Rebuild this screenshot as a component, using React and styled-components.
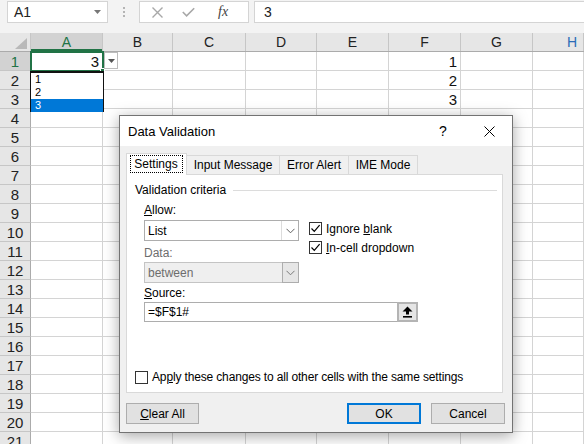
import React from 'react';
import styled, { createGlobalStyle } from 'styled-components';

const Global = createGlobalStyle`
  html, body { margin: 0; padding: 0; background: #fff; overflow: hidden; }
  #root { width: 584px; height: 444px; }
  * { box-sizing: border-box; }
`;

const Screen = styled.div`
  position: relative;
  width: 584px;
  height: 444px;
  overflow: hidden;
  background: #fff;
  font-family: "Liberation Sans", Arial, sans-serif;
  color: #222;
`;

/* ---------- formula bar ---------- */
const TopBar = styled.div`
  height: 33px;
  background: #f3f3f3;
  display: flex;
  align-items: flex-start;
  padding: 1px 0 0 7px;
`;

const NameBox = styled.div`
  width: 101px;
  height: 22px;
  background: #fff;
  border: 1px solid #d4d4d4;
  display: flex;
  align-items: center;
  justify-content: space-between;
  padding: 0 6px 0 6px;
  font-size: 14px;
  color: #222;
`;

const Dots = styled.div`
  width: 31px;
  height: 22px;
  display: flex;
  flex-direction: column;
  align-items: center;
  justify-content: center;
  gap: 2px;
  & > span { width: 2px; height: 2px; background: #b4b4b4; }
`;

const FxBox = styled.div`
  width: 110px;
  height: 22px;
  background: #fff;
  border: 1px solid #d4d4d4;
  display: flex;
  align-items: center;
  padding-left: 12px;
  gap: 19px;
`;

const FxText = styled.span`
  font-family: "Liberation Serif", "Times New Roman", serif;
  font-style: italic;
  font-size: 14px;
  color: #444;
  margin-left: 4px;
`;

const FormulaBox = styled.div`
  flex: 1;
  height: 22px;
  margin-left: 5px;
  background: #fff;
  border: 1px solid #d4d4d4;
  border-right: none;
  display: flex;
  align-items: center;
  padding-left: 9px;
  font-size: 14px;
`;

/* ---------- grid ---------- */
const HeaderRow = styled.div`
  display: flex;
  height: 19px;
  background: #e6e6e6;
  border-bottom: 1px solid #ababab;
`;

const Corner = styled.div`
  flex: 0 0 31px;
  border-right: 1px solid #c6c6c6;
  display: flex;
  align-items: flex-end;
  justify-content: flex-end;
  padding: 0 3px 2px 0;
`;

const ColHead = styled.div`
  flex: ${p => (p.$w ? `0 0 ${p.$w}px` : '1 1 auto')};
  border-right: 1px solid #c6c6c6;
  display: flex;
  align-items: center;
  font-size: 14px;
  color: ${p => p.$color || (p.$active ? '#217346' : '#222')};
  background: ${p => (p.$active ? '#d2d2d2' : 'transparent')};
  box-shadow: ${p => (p.$active ? 'inset 0 -2px 0 #217346' : 'none')};
  padding-left: ${p => p.$pl || 0}px;
  justify-content: ${p => (p.$pl ? 'flex-start' : 'center')};
`;

const Row = styled.div`
  display: flex;
  height: 19px;
`;

const RowHead = styled.div`
  flex: 0 0 31px;
  background: ${p => (p.$active ? '#d2d2d2' : '#e6e6e6')};
  color: ${p => (p.$active ? '#217346' : '#222')};
  border-right: 1px solid #ababab;
  border-bottom: 1px solid #c6c6c6;
  display: flex;
  align-items: center;
  justify-content: center;
  font-size: 15px;
`;

const Cell = styled.div`
  flex: ${p => (p.$w ? `0 0 ${p.$w}px` : '1 1 auto')};
  border-right: 1px solid #d4d4d4;
  border-bottom: 1px solid #d4d4d4;
  display: flex;
  align-items: center;
  justify-content: flex-end;
  padding-right: 3px;
  font-size: 15px;
  color: #111;
`;

/* ---------- overlays on the sheet ---------- */
const ActiveCell = styled.div`
  position: absolute;
  left: 30px;
  top: 51px;
  width: 74px;
  height: 21px;
  border: 2px solid #217346;
  pointer-events: none;
`;

const FillHandle = styled.div`
  position: absolute;
  right: -3px;
  bottom: -3px;
  width: 5px;
  height: 5px;
  background: #217346;
  border: 1px solid #fff;
`;

const DropButton = styled.div`
  position: absolute;
  left: 104px;
  top: 52px;
  width: 14px;
  height: 17px;
  background: #fff;
  border: 1px solid #bcbcbc;
  display: flex;
  align-items: center;
  justify-content: center;
`;

const DropList = styled.div`
  position: absolute;
  left: 30px;
  top: 71px;
  width: 74px;
  height: 41px;
  background: #fff;
  border: 1px solid #111;
  border-top-width: 2px;
  display: flex;
  flex-direction: column;
`;

const DropItem = styled.div`
  height: 13px;
  line-height: 13px;
  padding-left: 4px;
  font-size: 11px;
  color: ${p => (p.$sel ? '#fff' : '#000')};
  background: ${p => (p.$sel ? '#0078d7' : 'transparent')};
`;

/* ---------- dialog ---------- */
const Dialog = styled.div`
  position: absolute;
  left: 119px;
  top: 115px;
  width: 394px;
  height: 318px;
  border: 1px solid #737373;
  background: #f0f0f0;
  box-shadow: 0 3px 14px rgba(0, 0, 0, 0.35);
  display: flex;
  flex-direction: column;
  font-size: 12px;
  color: #000;
`;

const TitleBar = styled.div`
  height: 30px;
  flex: 0 0 30px;
  background: #fff;
  display: flex;
  align-items: center;
  padding-left: 8px;
  font-size: 13px;
`;

const TitleText = styled.div`
  flex: 1;
`;

const CaptionBtn = styled.div`
  width: 46px;
  height: 30px;
  display: flex;
  align-items: center;
  justify-content: center;
  font-size: 14px;
`;

const Body = styled.div`
  flex: 1;
  display: flex;
  flex-direction: column;
  padding: 7px 7px 0 6px;
`;

const TabRow = styled.div`
  display: flex;
  align-items: flex-start;
  height: 22px;
  margin-bottom: -1px;
  position: relative;
  z-index: 1;
`;

const Tab = styled.div`
  width: ${p => p.$w}px;
  height: ${p => (p.$sel ? 22 : 19)}px;
  margin-top: ${p => (p.$sel ? 0 : 2)}px;
  margin-left: ${p => (p.$first ? 0 : -1)}px;
  background: ${p => (p.$sel ? '#fff' : '#f0f0f0')};
  border: 1px solid #d9d9d9;
  border-bottom: none;
  display: flex;
  align-items: center;
  justify-content: center;
  padding-bottom: ${p => (p.$sel ? 2 : 0)}px;
`;

const FocusText = styled.span`
  border: 1px dotted #000;
  padding: 1px 4px 1px 3px;
`;

const Panel = styled.div`
  width: 377px;
  height: 219px;
  background: #fff;
  border: 1px solid #d9d9d9;
  display: flex;
  flex-direction: column;
  padding: 7px 5px 7px 8px;
`;

const Legend = styled.div`
  display: flex;
  align-items: center;
  height: 16px;
  gap: 7px;
  &::after {
    content: '';
    flex: 1;
    height: 1px;
    background: #dcdcdc;
  }
`;

const Criteria = styled.div`
  margin-left: 9px;
  display: flex;
  flex-direction: column;
`;

const Split = styled.div`
  display: flex;
  gap: 10px;
`;

const Column = styled.div`
  display: flex;
  flex-direction: column;
  padding-top: ${p => p.$pt || 0}px;
`;

const Label = styled.div`
  height: 16px;
  line-height: 16px;
  margin-top: ${p => p.$mt || 0}px;
  color: ${p => (p.$disabled ? '#6d6d6d' : '#000')};
`;

const Select = styled.div`
  width: 155px;
  height: 21px;
  margin-top: ${p => p.$mt || 0}px;
  display: flex;
  background: ${p => (p.$disabled ? '#efefef' : '#fff')};
  border: 1px solid ${p => (p.$disabled ? '#c4c4c4' : '#adadad')};
  color: ${p => (p.$disabled ? '#6d6d6d' : '#000')};
`;

const SelectValue = styled.div`
  flex: 1;
  display: flex;
  align-items: center;
  padding-left: 3px;
`;

const SelectArrow = styled.div`
  width: 17px;
  display: flex;
  align-items: center;
  justify-content: center;
  border-left: 1px solid ${p => (p.$disabled ? '#adadad' : '#dcdcdc')};
  background: ${p => (p.$disabled ? '#e6e6e6' : '#fff')};
  ${p => (p.$disabled ? 'margin: -1px -1px -1px 0; border: 1px solid #adadad;' : '')}
`;

const CheckRow = styled.label`
  display: flex;
  align-items: center;
  height: 19px;
  gap: 4px;
`;

const Box = styled.span`
  width: 13px;
  height: 13px;
  border: 1px solid #333;
  background: #fff;
  display: flex;
  align-items: center;
  justify-content: center;
`;

const SourceBox = styled.div`
  width: 274px;
  height: 20px;
  margin-top: 1px;
  border: 1px solid #adadad;
  background: #fff;
  display: flex;
`;

const SourceText = styled.div`
  flex: 1;
  display: flex;
  align-items: center;
  padding-left: 3px;
`;

const RefButton = styled.div`
  width: 21px;
  margin: -1px -1px -1px 0;
  background: #e5e5e5;
  border: 2px solid #b4b4b4;
  display: flex;
  align-items: center;
  justify-content: center;
`;

const ApplyRow = styled(CheckRow)`
  margin-top: auto;
  height: 16px;
`;

const ApplyText = styled.span`
  letter-spacing: -0.15px;
`;

const ButtonRow = styled.div`
  display: flex;
  justify-content: space-between;
  margin-top: 10px;
`;

const ButtonGroup = styled.div`
  display: flex;
  gap: 10px;
`;

const Button = styled.div`
  width: ${p => p.$w}px;
  height: 21px;
  background: #e1e1e1;
  border: ${p => (p.$default ? '2px solid #0078d7' : '1px solid #adadad')};
  display: flex;
  align-items: center;
  justify-content: center;
`;

/* ---------- icons ---------- */
const Chevron = ({ color = '#606060' }) => (
  <svg width="9" height="6" viewBox="0 0 9 6">
    <path d="M0.5 0.8 L4.5 4.8 L8.5 0.8" fill="none" stroke={color} strokeWidth="1" />
  </svg>
);

const Check = () => (
  <svg width="11" height="11" viewBox="0 0 11 11">
    <path d="M1.5 5.5 L4.3 8.3 L9.6 2.2" fill="none" stroke="#000" strokeWidth="1.2" />
  </svg>
);

const Tri = ({ w = 7, h = 4, color = '#555' }) => (
  <svg width={w} height={h} viewBox={`0 0 ${w} ${h}`}>
    <path d={`M0 0 L${w} 0 L${w / 2} ${h} Z`} fill={color} />
  </svg>
);

const CloseX = ({ size = 10, color = '#000', sw = 1 }) => (
  <svg width={size} height={size} viewBox={`0 0 ${size} ${size}`}>
    <path d={`M0.5 0.5 L${size - 0.5} ${size - 0.5} M${size - 0.5} 0.5 L0.5 ${size - 0.5}`} stroke={color} strokeWidth={sw} fill="none" />
  </svg>
);

const Tick = () => (
  <svg width="13" height="10" viewBox="0 0 13 10">
    <path d="M0.8 5 L4.6 8.8 L12.2 1.2" fill="none" stroke="#a8a8a8" strokeWidth="1.6" />
  </svg>
);

const UploadIcon = () => (
  <svg width="11" height="12" viewBox="0 0 11 12">
    <path d="M5.5 0.5 L10.5 5.5 L7 5.5 L7 8.5 L4 8.5 L4 5.5 L0.5 5.5 Z" fill="#000" />
    <rect x="1" y="10" width="9" height="1.6" fill="#000" />
  </svg>
);

const CornerTri = () => (
  <svg width="12" height="11" viewBox="0 0 12 11">
    <path d="M12 0 L12 11 L0 11 Z" fill="#b9b9b9" />
  </svg>
);

/* ---------- data ---------- */
const COLS = [
  { k: 'A', w: 72 },
  { k: 'B', w: 70 },
  { k: 'C', w: 73 },
  { k: 'D', w: 71 },
  { k: 'E', w: 72 },
  { k: 'F', w: 72 },
  { k: 'G', w: 72 },
  { k: 'H', w: 0 },
];

const VALUES = { '1A': '3', '1F': '1', '2F': '2', '3F': '3' };

const rows = Array.from({ length: 21 }, (_, i) => i + 1);

export default function App() {
  return (
    <Screen>
      <Global />
      <TopBar>
        <NameBox>
          <span>A1</span>
          <Tri w={7} h={4} color="#777" />
        </NameBox>
        <Dots>
          <span />
          <span />
          <span />
        </Dots>
        <FxBox>
          <CloseX size={11} color="#a8a8a8" sw={1.4} />
          <Tick />
          <FxText>fx</FxText>
        </FxBox>
        <FormulaBox>3</FormulaBox>
      </TopBar>

      <HeaderRow>
        <Corner>
          <CornerTri />
        </Corner>
        {COLS.map(c => (
          <ColHead
            key={c.k}
            $w={c.w}
            $active={c.k === 'A'}
            $color={c.k === 'H' ? '#2b6cb8' : undefined}
            $pl={c.k === 'H' ? 34 : 0}
          >
            {c.k}
          </ColHead>
        ))}
      </HeaderRow>

      {rows.map(r => (
        <Row key={r}>
          <RowHead $active={r === 1}>{r}</RowHead>
          {COLS.map(c => (
            <Cell key={c.k} $w={c.w}>
              {VALUES[`${r}${c.k}`] || ''}
            </Cell>
          ))}
        </Row>
      ))}

      <ActiveCell>
        <FillHandle />
      </ActiveCell>
      <DropButton>
        <Tri w={7} h={4} color="#555" />
      </DropButton>
      <DropList>
        <DropItem>1</DropItem>
        <DropItem>2</DropItem>
        <DropItem $sel>3</DropItem>
      </DropList>

      <Dialog>
        <TitleBar>
          <TitleText>Data Validation</TitleText>
          <CaptionBtn>?</CaptionBtn>
          <CaptionBtn>
            <CloseX size={11} />
          </CaptionBtn>
        </TitleBar>
        <Body>
          <TabRow>
            <Tab $w={61} $sel $first>
              <FocusText>Settings</FocusText>
            </Tab>
            <Tab $w={94}>Input Message</Tab>
            <Tab $w={70}>Error Alert</Tab>
            <Tab $w={70}>IME Mode</Tab>
          </TabRow>
          <Panel>
            <Legend>Validation criteria</Legend>
            <Criteria>
              <Split>
                <Column>
                  <Label $mt={4}>
                    <u>A</u>llow:
                  </Label>
                  <Select $mt={2}>
                    <SelectValue>List</SelectValue>
                    <SelectArrow>
                      <Chevron />
                    </SelectArrow>
                  </Select>
                  <Label $mt={4} $disabled>
                    Data:
                  </Label>
                  <Select $mt={1} $disabled>
                    <SelectValue>between</SelectValue>
                    <SelectArrow $disabled>
                      <Chevron color="#7a7a7a" />
                    </SelectArrow>
                  </Select>
                </Column>
                <Column $pt={21}>
                  <CheckRow>
                    <Box>
                      <Check />
                    </Box>
                    <span>
                      Ignore <u>b</u>lank
                    </span>
                  </CheckRow>
                  <CheckRow>
                    <Box>
                      <Check />
                    </Box>
                    <span>
                      <u>I</u>n-cell dropdown
                    </span>
                  </CheckRow>
                </Column>
              </Split>
              <Label $mt={2}>
                <u>S</u>ource:
              </Label>
              <SourceBox>
                <SourceText>=$F$1#</SourceText>
                <RefButton>
                  <UploadIcon />
                </RefButton>
              </SourceBox>
            </Criteria>
            <ApplyRow>
              <Box />
              <ApplyText>
                Ap<u>p</u>ly these changes to all other cells with the same settings
              </ApplyText>
            </ApplyRow>
          </Panel>
          <ButtonRow>
            <Button $w={73}>
              <span>
                <u>C</u>lear All
              </span>
            </Button>
            <ButtonGroup>
              <Button $w={74} $default>
                OK
              </Button>
              <Button $w={74}>Cancel</Button>
            </ButtonGroup>
          </ButtonRow>
        </Body>
      </Dialog>
    </Screen>
  );
}
